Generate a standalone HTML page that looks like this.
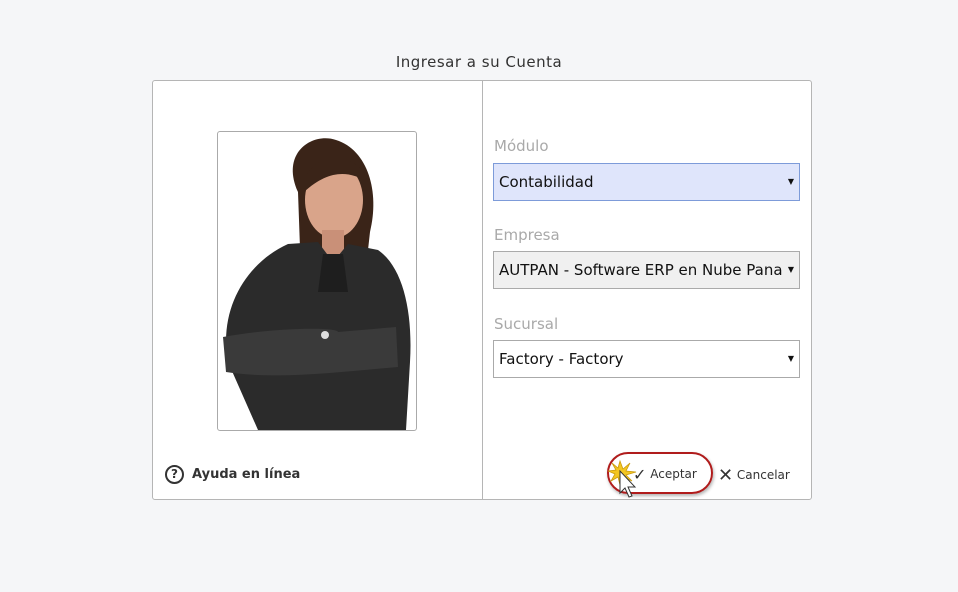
<!DOCTYPE html>
<html><head><meta charset="utf-8"><style>
body{margin:0;width:958px;height:592px;background:#f5f6f8;font-family:"DejaVu Sans","Liberation Sans",sans-serif;position:relative;overflow:hidden}
.t{position:absolute;top:53px;left:0;width:958px;text-align:center;font-size:15px;color:#333;letter-spacing:.5px}
.box{position:absolute;left:152px;top:80px;width:658px;height:418px;background:#fff;border:1px solid #b5b5b5;border-radius:3px}
.div{position:absolute;left:329px;top:0;width:1px;height:418px;background:#b5b5b5}
.ph{position:absolute;left:64px;top:50px;width:198px;height:298px;border:1px solid #aaa;border-radius:3px;overflow:hidden;background:#fff}
.lbl{position:absolute;left:341px;font-size:15px;color:#a9a9a9}
.sel{position:absolute;left:340px;width:307px;height:38px;border:1px solid #aaa;box-sizing:border-box;font-size:15px;color:#111;line-height:36px;padding-left:5px;white-space:nowrap;overflow:hidden}
.sel i{position:absolute;right:0;top:0;width:16px;height:36px;font-style:normal;font-size:8px;text-align:center;background:inherit}
.help{position:absolute;left:12px;top:384px;font-size:13px;font-weight:bold;color:#333;display:flex;align-items:center}
.help span.c{width:19px;height:19px;border:2px solid #333;border-radius:50%;box-sizing:border-box;font-size:12px;text-align:center;line-height:15px;margin-right:8px}
.btn{position:absolute;top:384px;font-size:12px;color:#333}
</style></head><body>
<div class="t">Ingresar a su Cuenta</div>
<div class="box">
<div class="div"></div>
<div class="ph"><svg width="198" height="298" viewBox="0 0 198 298">
<path d="M80 60 C62 20 95 0 118 8 C150 18 162 60 152 100 L150 118 L82 116 Z" fill="#3a2418"/>
<ellipse cx="116" cy="68" rx="29" ry="38" fill="#d9a48a"/>
<path d="M86 50 C95 18 140 18 150 50 C130 38 110 38 86 60Z" fill="#3a2418"/>
<rect x="104" y="98" width="22" height="25" fill="#c99078"/>
<path d="M40 298 L10 230 C0 175 30 130 70 112 L100 110 L115 130 L130 112 L160 118 C185 135 195 180 192 230 L188 298Z" fill="#2b2b2b"/>
<path d="M5 205 C60 195 120 195 120 200 L178 195 L180 235 C120 240 60 248 8 240Z" fill="#3a3a3a"/>
<circle cx="107" cy="203" r="4" fill="#ddd"/>
<path d="M105 122 L100 160 L130 160 L125 122Z" fill="#1e1e1e"/>
</svg></div>
<div class="lbl" style="top:56px">Módulo</div>
<div class="sel" style="top:82px;background:#dfe5fb;border-color:#7d9bd9">Contabilidad<i>▼</i></div>
<div class="lbl" style="top:145px">Empresa</div>
<div class="sel" style="top:170px;background:#f0f0f0">AUTPAN - Software ERP en Nube Panamá<i>▼</i></div>
<div class="lbl" style="top:234px">Sucursal</div>
<div class="sel" style="top:259px;background:#fff">Factory - Factory<i>▼</i></div>
<div class="help"><span class="c">?</span>Ayuda en línea</div>
<div style="position:absolute;left:454px;top:371px;width:106px;height:42px;border:2px solid #b01c1c;border-radius:22px;box-sizing:border-box;box-shadow:1px 2px 3px rgba(0,0,0,.3)"></div>
<div class="btn" style="left:480px"><span style="font-size:16px;vertical-align:-2px">✓</span> Aceptar</div>
<div class="btn" style="left:565px"><span style="font-size:18px;vertical-align:-2px">✕</span> Cancelar</div>
<svg style="position:absolute;left:455px;top:378px" width="34" height="48"><path d="M12 2 L15 10 L22 4 L18 12 L28 13 L18 16 L24 22 L15 18 L12 26 L10 18 L3 22 L7 15 L0 12 L8 11 L4 4 L10 9Z" fill="#f3c621" stroke="#c99a10" stroke-width=".8"/><path d="M12 12 L12 34 L17 29 L21 38 L24 37 L20 28 L27 28Z" fill="#fff" stroke="#333"/></svg>
</div>
</body></html>
